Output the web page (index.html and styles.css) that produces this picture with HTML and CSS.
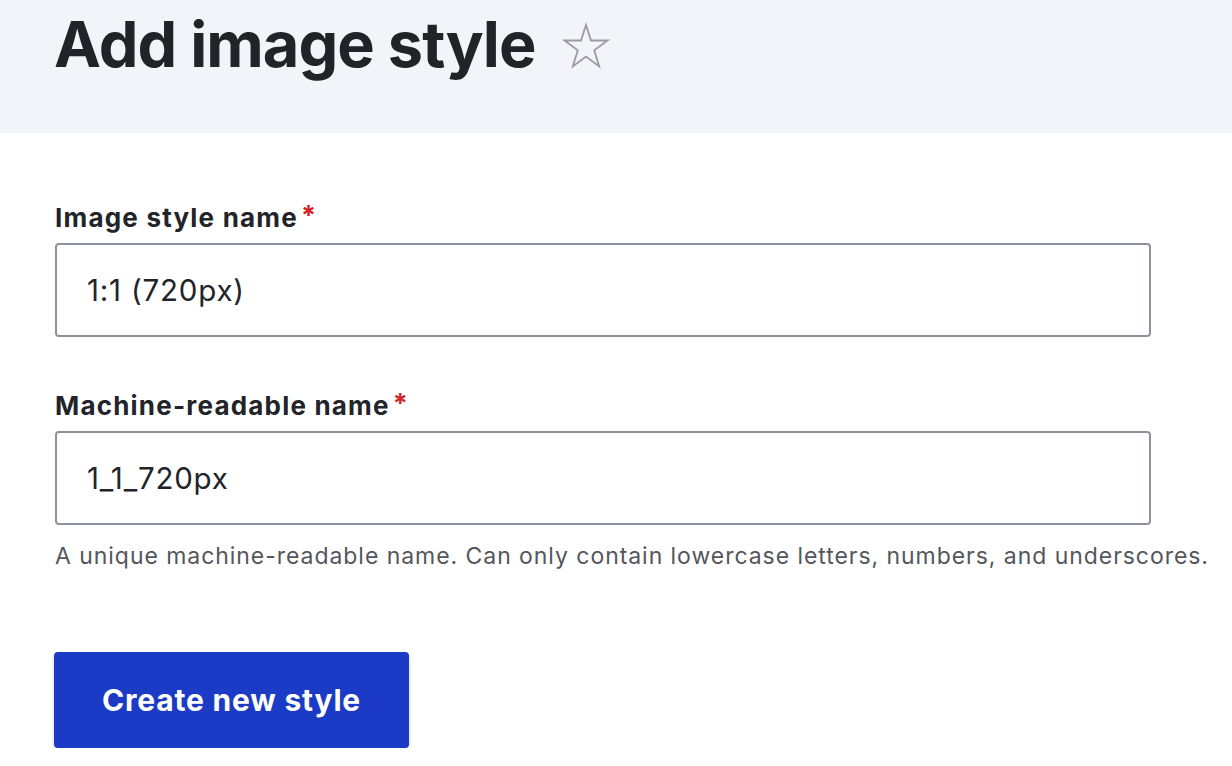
FILE: index.html
```html
<!DOCTYPE html>
<html lang="en">
<head>
<meta charset="utf-8">
<title>Add image style</title>
<link rel="stylesheet" href="styles.css">
</head>
<body>
<header class="page-header">
  <h1 class="page-title">Add image style
    <svg class="star" viewBox="0 0 48 48" aria-hidden="true"><path d="M24 3 L29 18.5 L45.5 18.5 L32.2 28.3 L37.2 44.4 L24 34.6 L10.8 44.4 L15.8 28.3 L2.5 18.5 L19 18.5 Z" fill="none" stroke="#9a9ba2" stroke-width="1.8" stroke-linejoin="miter"/></svg>
  </h1>
</header>
<main class="content">
  <form class="form">
    <div class="field field-first">
      <label class="label">Image style name<span class="req">*</span></label>
      <input class="input" type="text" value="1:1 (720px)">
    </div>
    <div class="field field-second">
      <label class="label">Machine-readable name<span class="req">*</span></label>
      <input class="input" type="text" value="1_1_720px">
      <div class="desc">A unique machine-readable name. Can only contain lowercase letters, numbers, and underscores.</div>
    </div>
    <div class="actions">
      <button class="button" type="button">Create new style</button>
    </div>
  </form>
</main>
</body>
</html>
```

FILE: styles.css
```css
html, body {
  margin: 0;
  padding: 0;
  background: #ffffff;
  font-family: Inter, "Noto Sans", "Liberation Sans", sans-serif;
  color: #232429;
}

.page-header {
  background: #f3f4f9;
  height: 133px;
  padding: 0 0 0 54px;
  box-sizing: border-box;
}

.page-title {
  margin: 0;
  padding-top: 13px;
  font-size: 63px;
  line-height: 63px;
  font-weight: 700;
  letter-spacing: -0.95px;
  color: #222328;
  display: flex;
  align-items: center;
}

.star {
  width: 48px;
  height: 48px;
  margin-left: 26px;
  margin-top: 2px;
}

.content {
  padding: 70px 81px 0 55px;
}

.form {
  display: flex;
  flex-direction: column;
}

.field {
  display: flex;
  flex-direction: column;
}

.field-second {
  margin-top: 54px;
}

.label {
  font-size: 26px;
  line-height: 30px;
  font-weight: 700;
  color: #232429;
  margin-bottom: 10px;
  letter-spacing: 1.2px;
}

.req {
  color: #d72222;
  font-size: 27px;
  vertical-align: top;
  margin-left: 3px;
  line-height: 26px;
  letter-spacing: 0;
}

.input {
  box-sizing: border-box;
  height: 94px;
  width: 100%;
  border: 2px solid #8e929c;
  border-radius: 4px;
  padding: 0 30px;
  font-family: inherit;
  font-size: 29.5px;
  letter-spacing: 0.8px;
  color: #232429;
  background: #fff;
  outline: none;
}

.desc {
  margin-top: 18px;
  font-size: 23px;
  line-height: 26px;
  letter-spacing: 0.95px;
  color: #55565b;
  white-space: nowrap;
}

.actions {
  margin-top: 83px;
}

.button {
  box-sizing: border-box;
  width: 355px;
  height: 96px;
  margin-left: -1px;
  border: none;
  border-radius: 4px;
  background: #1b3bc7;
  color: #ffffff;
  font-family: inherit;
  font-size: 30px;
  letter-spacing: 0.8px;
  font-weight: 700;
  box-shadow: 0 2px 4px rgba(0, 0, 0, 0.18);
  cursor: pointer;
}
```
